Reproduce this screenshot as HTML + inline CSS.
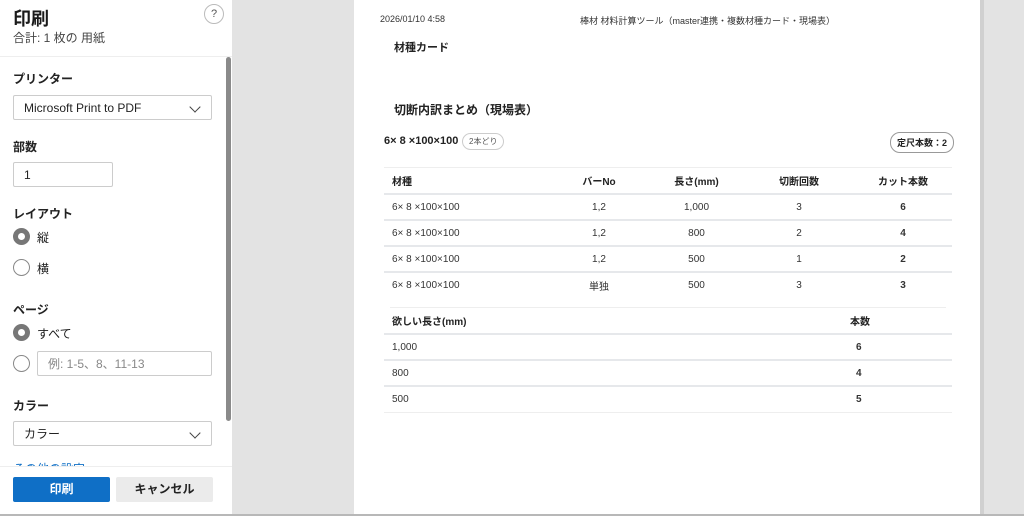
<!DOCTYPE html>
<html><head><meta charset="utf-8"><style>
*{margin:0;padding:0;box-sizing:border-box}
body{width:1024px;height:516px;overflow:hidden;background:#e3e3e3;font-family:"Liberation Sans","Noto Sans CJK JP",sans-serif;color:#1a1a1a;position:relative}
.abs{position:absolute}
#left{left:0;top:0;width:232px;height:516px;background:#fff}
.lbl{font-size:12px;font-weight:bold;color:#222}
.box{border:1px solid #ccc;border-radius:2px;background:#fff;font-size:12px;color:#222;padding-left:10px;display:flex;align-items:center}
.radio{width:17px;height:17px;border-radius:50%;border:1px solid #888;background:#fff}
.radio.on{border:5px solid #777}
.chev{position:absolute;right:12px;top:7px;width:8px;height:8px;border-right:1.3px solid #444;border-bottom:1.3px solid #444;transform:rotate(45deg)}
#page{left:354px;top:0;width:626px;height:514px;background:#fff}
.t{position:absolute;font-size:10px;color:#333}
table{border-collapse:collapse;font-size:10px;color:#333}
td,th{height:26px;border-bottom:2px solid #e6e8eb;font-weight:normal}
th{font-weight:bold;color:#222}
</style></head><body>
<div id="left" class="abs">
 <div class="abs" style="left:13px;top:5px;font-size:18px;font-weight:bold">印刷</div>
 <div class="abs" style="left:13px;top:29px;font-size:12px;color:#444">合計: 1 枚の 用紙</div>
 <div class="abs" style="left:204px;top:4px;width:20px;height:20px;border:1px solid #bbb;border-radius:50%;font-size:11px;text-align:center;line-height:18px;color:#555">?</div>
 <div class="abs" style="left:0;top:56px;width:232px;border-top:1px solid #eee"></div>
 <div class="abs lbl" style="left:13px;top:70px">プリンター</div>
 <div class="abs box" style="left:13px;top:95px;width:199px;height:25px">Microsoft Print to PDF<div class="chev"></div></div>
 <div class="abs lbl" style="left:13px;top:138px">部数</div>
 <div class="abs box" style="left:13px;top:162px;width:100px;height:25px">1</div>
 <div class="abs lbl" style="left:13px;top:205px">レイアウト</div>
 <div class="abs radio on" style="left:13px;top:228px"></div><div class="abs" style="left:37px;top:229px;font-size:12px">縦</div>
 <div class="abs radio" style="left:13px;top:259px"></div><div class="abs" style="left:37px;top:260px;font-size:12px">横</div>
 <div class="abs lbl" style="left:13px;top:301px">ページ</div>
 <div class="abs radio on" style="left:13px;top:324px"></div><div class="abs" style="left:37px;top:325px;font-size:12px">すべて</div>
 <div class="abs radio" style="left:13px;top:355px"></div>
 <div class="abs box" style="left:37px;top:351px;width:175px;height:25px;color:#888">例: 1-5、8、11-13</div>
 <div class="abs lbl" style="left:13px;top:397px">カラー</div>
 <div class="abs box" style="left:13px;top:421px;width:199px;height:25px">カラー<div class="chev"></div></div>
 <div class="abs" style="left:13px;top:460px;font-size:12px;color:#0f6fc6">その他の設定</div>
 <div class="abs" style="left:0;top:466px;width:232px;height:50px;background:#fff;border-top:1px solid #eee"></div>
 <div class="abs" style="left:13px;top:477px;width:97px;height:25px;background:#0f6fc6;color:#fff;font-size:12px;font-weight:bold;text-align:center;line-height:25px;border-radius:2px">印刷</div>
 <div class="abs" style="left:116px;top:477px;width:97px;height:25px;background:#ebebeb;color:#222;font-size:12px;font-weight:bold;text-align:center;line-height:25px;border-radius:2px">キャンセル</div>
 <div class="abs" style="left:226px;top:57px;width:5px;height:364px;background:#8a8a8a;border-radius:3px"></div>
</div>
<div class="abs" style="left:0;top:514px;width:1024px;height:2px;background:#b8b8b8"></div>
<div class="abs" style="left:980px;top:0;width:4px;height:514px;background:#d0d0d0"></div>
<div id="page" class="abs">
 <div class="t" style="left:26px;top:14px;font-size:9px">2026/01/10 4:58</div>
 <div class="t" style="left:226px;top:14px;font-size:9px">棒材 材料計算ツール（master連携・複数材種カード・現場表）</div>
 <div class="t" style="left:40px;top:39px;font-size:11px;font-weight:bold;color:#222">材種カード</div>
 <div class="t" style="left:40px;top:101px;font-size:12px;font-weight:bold;color:#222">切断内訳まとめ（現場表）</div>
 <div class="t" style="left:30px;top:135px;font-size:11px;font-weight:bold;color:#222">6× 8 ×100×100</div>
 <div class="t" style="left:108px;top:133px;border:1px solid #ccc;border-radius:9px;padding:2px 6px;font-size:8px;color:#555">2本どり</div>
 <div class="t" style="left:536px;top:132px;border:1px solid #999;border-radius:10px;padding:3px 6px;font-size:9px;font-weight:bold;color:#222">定尺本数：2</div>
 <div class="abs" style="left:30px;top:167px;width:568px;border-top:1px solid #eee"></div>
 <table class="abs" style="left:30px;top:168px;width:568px">
  <tr><th style="text-align:left;padding-left:8px;width:165px">材種</th><th style="width:100px">バーNo</th><th style="width:95px">長さ(mm)</th><th style="width:110px">切断回数</th><th>カット本数</th></tr>
  <tr><td style="padding-left:8px">6× 8 ×100×100</td><td align="center">1,2</td><td align="center">1,000</td><td align="center">3</td><td align="center"><b>6</b></td></tr>
  <tr><td style="padding-left:8px">6× 8 ×100×100</td><td align="center">1,2</td><td align="center">800</td><td align="center">2</td><td align="center"><b>4</b></td></tr>
  <tr><td style="padding-left:8px">6× 8 ×100×100</td><td align="center">1,2</td><td align="center">500</td><td align="center">1</td><td align="center"><b>2</b></td></tr>
  <tr><td style="padding-left:8px;border:0">6× 8 ×100×100</td><td align="center" style="border:0">単独</td><td align="center" style="border:0">500</td><td align="center" style="border:0">3</td><td align="center" style="border:0"><b>3</b></td></tr>
 </table>
 <div class="abs" style="left:36px;top:307px;width:556px;border-top:1px solid #eee"></div>
 <table class="abs" style="left:30px;top:308px;width:568px">
  <tr><th style="text-align:left;padding-left:8px;width:420px">欲しい長さ(mm)</th><th style="text-align:left;padding-left:46px">本数</th></tr>
  <tr><td style="padding-left:8px">1,000</td><td style="padding-left:52px"><b>6</b></td></tr>
  <tr><td style="padding-left:8px">800</td><td style="padding-left:52px"><b>4</b></td></tr>
  <tr><td style="padding-left:8px;border-bottom:1px solid #eee">500</td><td style="padding-left:52px;border-bottom:1px solid #eee"><b>5</b></td></tr>
 </table>
</div>
</body></html>
